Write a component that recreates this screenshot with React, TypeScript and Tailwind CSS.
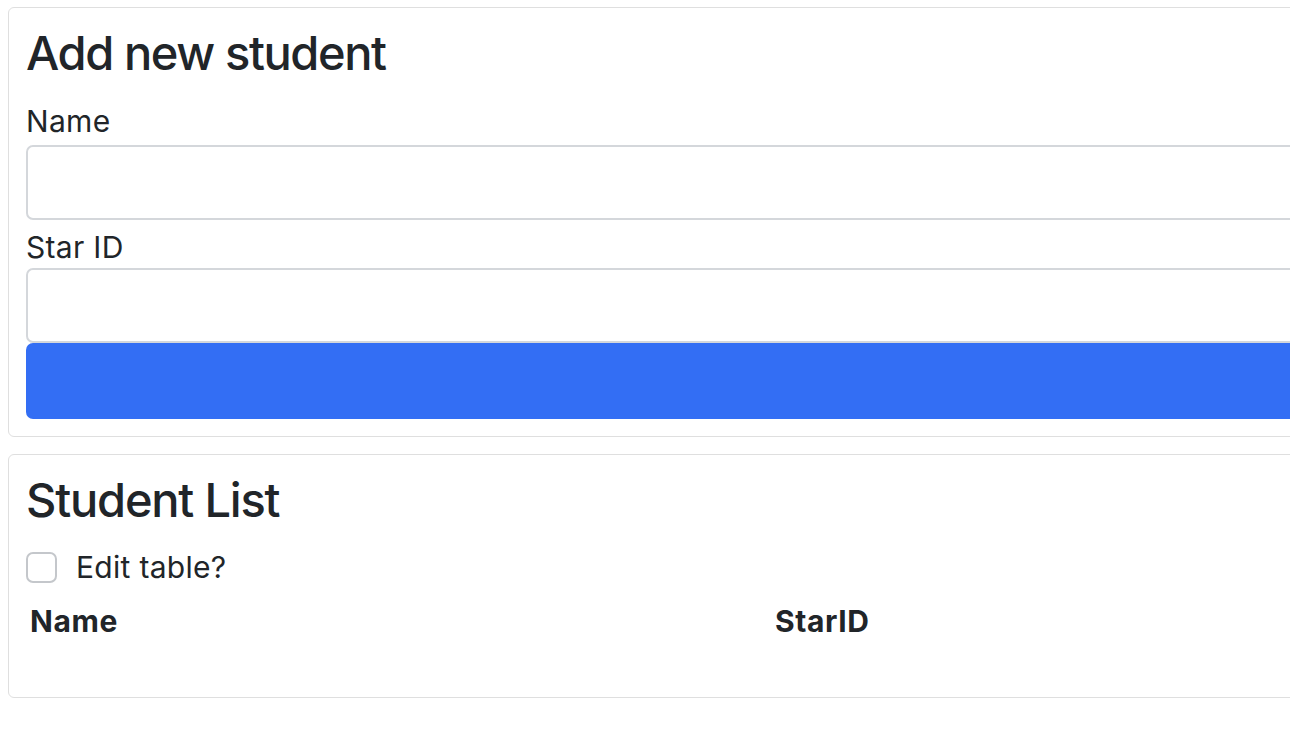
import { useState } from "react";

type Student = { name: string; starId: string };

export default function App() {
  const [name, setName] = useState("");
  const [starId, setStarId] = useState("");
  const [students, setStudents] = useState<Student[]>([]);
  const [editing, setEditing] = useState(false);

  const addStudent = () => {
    if (!name.trim() || !starId.trim()) return;
    setStudents((prev) => [...prev, { name, starId }]);
    setName("");
    setStarId("");
  };

  return (
    <div className="w-full min-h-screen overflow-hidden bg-white text-[#212529] font-['Inter','Helvetica_Neue',Arial,sans-serif]">
      <div className="w-[1340px] pl-[8px] pt-[7px]">
        {/* Add student card */}
        <div className="border border-[#dfdfdf] rounded-[6px] px-[17px] pt-[16px] pb-[17px]">
          <h2 className="text-[47px] leading-[58px] font-medium tracking-[-1.4px]">Add new student</h2>
          <label className="block mt-[19px] text-[30px] leading-[41px] tracking-[0.3px]">Name</label>
          <input
            value={name}
            onChange={(e) => setName(e.target.value)}
            className="block w-full h-[75px] mt-[3px] border-2 border-[#d4d7db] rounded-[7px] px-4 text-[28px] outline-none"
          />
          <label className="block mt-[7px] text-[30px] leading-[41px] tracking-[0.3px]">Star ID</label>
          <input
            value={starId}
            onChange={(e) => setStarId(e.target.value)}
            className="block w-full h-[75px] border-2 border-[#d4d7db] rounded-[7px] px-4 text-[28px] outline-none"
          />
          <button
            onClick={addStudent}
            className="block w-full h-[76px] bg-[#336ef4] rounded-[7px]"
          ></button>
        </div>

        {/* Student list card */}
        <div className="mt-[17px] border border-[#dfdfdf] rounded-[6px] px-[17px] pt-[16px] pb-[55px]">
          <h2 className="text-[47px] leading-[58px] font-medium tracking-[-1.2px]">Student List</h2>
          <div className="flex items-center mt-[17px] h-[42px]">
            <button
              onClick={() => setEditing(!editing)}
              className={`w-[31px] h-[31px] rounded-[7px] border-2 ${editing ? "bg-[#336ef4] border-[#336ef4]" : "border-[#c4c7cb] bg-white"}`}
            ></button>
            <span className="ml-[19px] text-[30px] leading-[42px] tracking-[0.3px]">Edit table?</span>
          </div>
          <table className="mt-[12px] w-full text-left">
            <thead>
              <tr>
                <th className="w-[745px] px-[4px] text-[30px] leading-[42px] font-bold tracking-[0.6px]">Name</th>
                <th className="px-[4px] text-[30px] leading-[42px] font-bold tracking-[0.6px]">StarID</th>
              </tr>
            </thead>
            <tbody>
              {students.map((s, i) => (
                <tr key={i}>
                  <td className="px-[4px] text-[28px] leading-[42px]">{s.name}</td>
                  <td className="px-[4px] text-[28px] leading-[42px]">{s.starId}</td>
                </tr>
              ))}
            </tbody>
          </table>
        </div>
      </div>
    </div>
  );
}
